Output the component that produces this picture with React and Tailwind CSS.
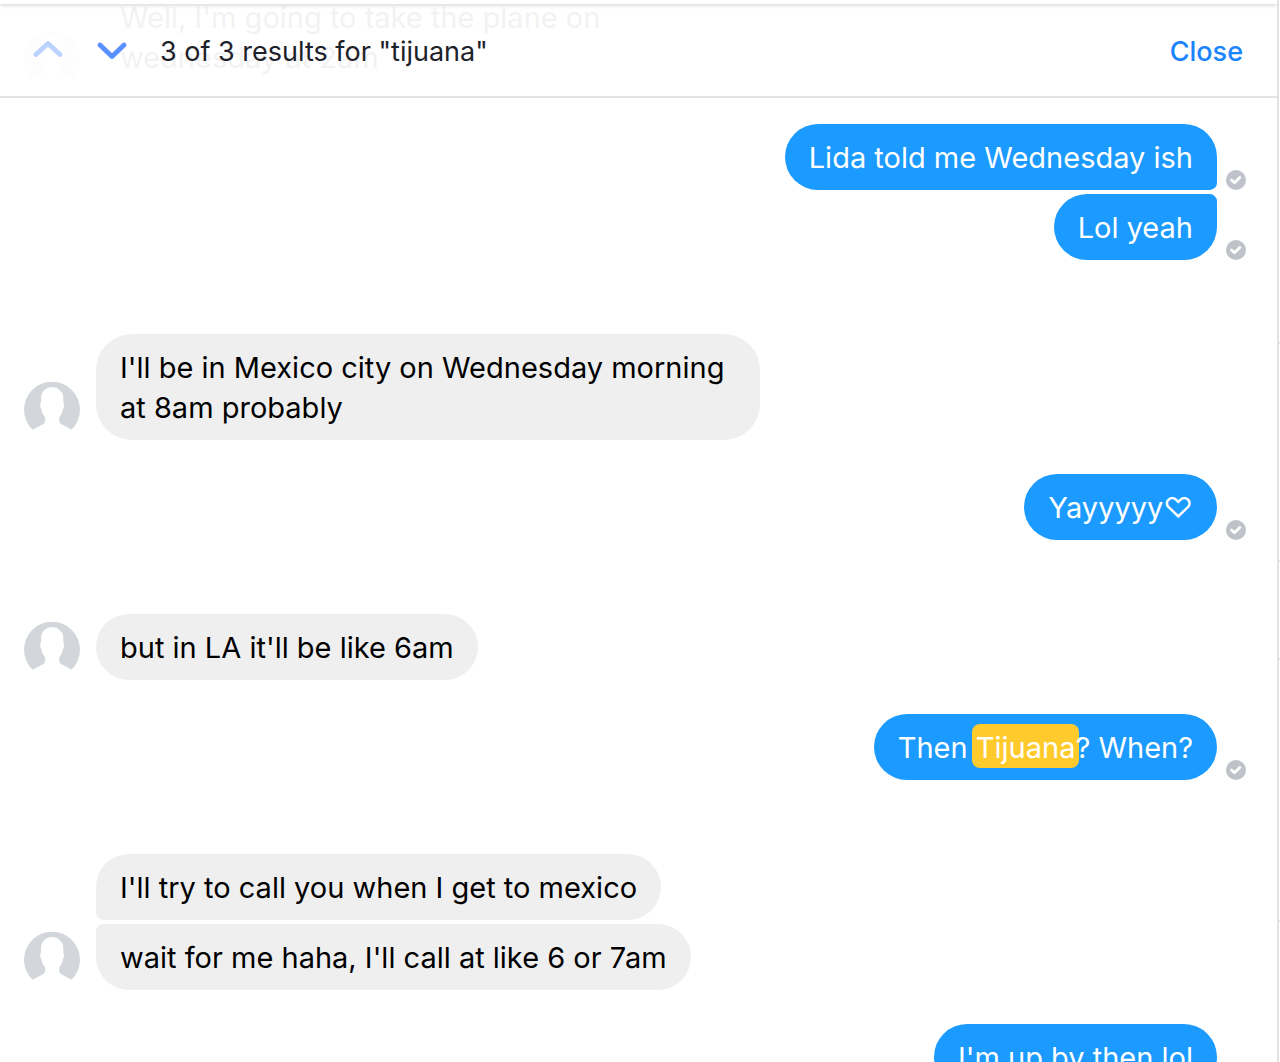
import React from 'react';

const groups = [
  { from: 'them', messages: ["Well, I'm going to take the plane on wednesday at 2am"] },
  { from: 'me', messages: ['Lida told me Wednesday ish', 'Lol yeah'] },
  { from: 'them', messages: ["I'll be in Mexico city on Wednesday morning at 8am probably"] },
  { from: 'me', messages: ['Yayyyyy♡'] },
  { from: 'them', messages: ["but in LA it'll be like 6am"] },
  { from: 'me', messages: ['Then Tijuana? When?'] },
  { from: 'them', messages: ["I'll try to call you when I get to mexico", "wait for me haha, I'll call at like 6 or 7am"] },
  { from: 'me', messages: ["I'm up by then lol"] },
];

const query = 'tijuana';

function Avatar() {
  return (
    <svg viewBox="0 0 56 56" className="mb-0.5 size-14 shrink-0" aria-hidden="true">
      <path
        fill="#d3d6db"
        d="M8.500 47.800A28 28 0 1 1 47.500 47.800L37.500 42.300C35.800 41.300 35.200 40 35.200 38.500C35.200 36.500 35.200 35.500 35.700 34.500C37.500 32.500 38.500 30 38.900 27C39.900 26 40.300 24 39.800 22C39.600 21 39.300 20.500 39.300 20C39.500 17 39.300 14 38.500 11.500C37.500 9.500 36 9 35.500 8C32.500 4 24.500 4 21 7.500C18 9.500 17 13 17 16.500C17 18 17.200 19 17.200 20C16.800 20.500 16.500 21 16.300 22C16 24 16.500 26 17.300 27C17.700 30 18.800 32.500 20.600 34.500C21.100 35.500 21.200 36.500 21.200 38.500C21.200 40 20.600 41.300 18.800 42.300Z"
      />
    </svg>
  );
}

function Delivered() {
  return (
    <svg viewBox="0 0 20 20" className="size-5 shrink-0" aria-hidden="true">
      <circle cx="10" cy="10" r="10" fill="#bfc2c9" />
      <path d="M5.500 10L8.500 12.800L13.800 7.500" fill="none" stroke="#fff" strokeWidth="2.800" strokeLinecap="round" strokeLinejoin="round" />
    </svg>
  );
}

// Wrap the searched word in a highlight
function MessageText({ text }) {
  const start = text.toLowerCase().indexOf(query);
  if (start === -1) {
    return text;
  }
  const end = start + query.length;
  return (
    <>
      {text.slice(0, start)}
      <mark className="-mx-1 rounded-lg bg-[#ffca2c] px-1 pt-[6px] pb-[3px] text-white">{text.slice(start, end)}</mark>
      {text.slice(end)}
    </>
  );
}

// Corners are tight where two bubbles of the same sender meet
const getCorners = (mine, index, count) => {
  const first = index === 0;
  const last = index === count - 1;
  if (mine) {
    return `${first ? '' : 'rounded-tr-lg'} ${last ? '' : 'rounded-br-lg'}`;
  }
  return `${first ? '' : 'rounded-tl-lg'} ${last ? '' : 'rounded-bl-lg'}`;
};

function MessageGroup({ group }) {
  const mine = group.from === 'me';

  if (mine) {
    return (
      <li className="mb-[74px] flex flex-col items-end gap-1 pr-[31px]">
        {group.messages.map((text, index) => (
          <div key={index} className="flex items-end gap-[9px]">
            <p className={`max-w-[664px] rounded-[36px] bg-[#1b9aff] px-6 pt-[14px] pb-3 text-white ${getCorners(true, index, group.messages.length)}`}>
              <MessageText text={text} />
            </p>
            <Delivered />
          </div>
        ))}
      </li>
    );
  }

  return (
    <li className="mb-[34px] flex items-end gap-4 pl-6">
      <Avatar />
      <div className="flex flex-col items-start gap-1">
        {group.messages.map((text, index) => (
          <p key={index} className={`max-w-[664px] rounded-[36px] bg-[#efefef] px-6 pt-[14px] pb-3 text-black ${getCorners(false, index, group.messages.length)}`}>
            <MessageText text={text} />
          </p>
        ))}
      </div>
    </li>
  );
}

function SearchBar() {
  return (
    <header className="absolute inset-x-0 top-0 z-10 flex items-center border-b-2 border-[#e3e3e3] bg-white/95 pt-1 pr-[34px] pl-8">
      <div className="absolute inset-x-0 top-0 h-1 bg-white shadow-[0_1px_4px_rgba(0,0,0,0.2)]" />
      <div className="flex h-[92px] items-center gap-8">
        <button type="button" aria-label="Previous result" disabled className="opacity-40">
          <svg viewBox="0 0 32 24" className="h-6 w-8" fill="none" stroke="#5890ff" strokeWidth="4.800" strokeLinecap="round" strokeLinejoin="round">
            <path d="M4 16.500L16 5.500L28 16.500" />
          </svg>
        </button>
        <button type="button" aria-label="Next result">
          <svg viewBox="0 0 32 24" className="h-6 w-8" fill="none" stroke="#5890ff" strokeWidth="4.800" strokeLinecap="round" strokeLinejoin="round">
            <path d="M4 7L16 18.500L28 7" />
          </svg>
        </button>
        <p className="pt-1 text-[27px] text-[#1d2129]">3 of 3 results for "tijuana"</p>
      </div>
      <button type="button" className="ml-auto pt-1 text-[27px] font-medium text-[#1a84ff]">Close</button>
    </header>
  );
}

function App() {
  return (
    <div className="flex h-screen overflow-hidden bg-white font-['Inter','DejaVu_Sans',sans-serif]">
      <main className="relative min-w-0 flex-1 overflow-hidden border-r-2 border-[#e3e3e3]">
        <SearchBar />
        <ul className="-mt-4 text-[29px] leading-10">
          {groups.map((group, index) => (
            <MessageGroup key={index} group={group} />
          ))}
        </ul>
      </main>
      {/* Edge of the details panel with its section dividers */}
      <aside className="w-px">
        <div className="h-[344px] border-b-2 border-[#e3e3e3]" />
        <div className="h-[218px] border-b-2 border-[#e3e3e3]" />
        <div className="h-[98px] border-b-2 border-[#e3e3e3]" />
        <div className="h-[262px] border-b-2 border-[#e3e3e3]" />
      </aside>
    </div>
  );
}

export default App;
